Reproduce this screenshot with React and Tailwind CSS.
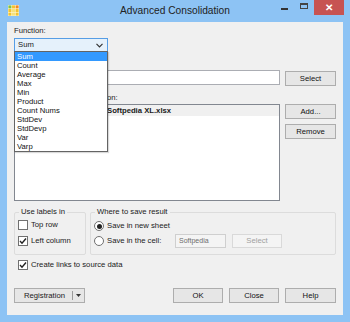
import React from 'react';

const font = { fontFamily: '"Liberation Sans", Arial, sans-serif' };

function Btn({ children, className = '', disabled }) {
  return (
    <div
      className={`flex items-center justify-center border ${disabled ? 'border-[#d9d9d9] bg-[#f4f4f4] text-[#a0a0a0]' : 'border-[#adadad] bg-[#e6e6e6] text-[#111]'} text-[7.7px] leading-none ${className}`}
    >
      {children}
    </div>
  );
}

function Check({ checked }) {
  return (
    <div className="w-[10px] h-[10px] border border-[#707070] bg-white flex items-center justify-center shrink-0">
      {checked && (
        <svg width="8" height="8" viewBox="0 0 8 8">
          <path d="M1 4 L3 6.2 L7 1.5" stroke="#222" strokeWidth="1.4" fill="none" />
        </svg>
      )}
    </div>
  );
}

function Radio({ checked }) {
  return (
    <div className="w-[10px] h-[10px] rounded-full border border-[#707070] bg-white flex items-center justify-center shrink-0">
      {checked && <div className="w-[5px] h-[5px] rounded-full bg-[#222]" />}
    </div>
  );
}

function AppIcon() {
  const colors = [
    ['#7cc24a', '#f2c230', '#f08a24'],
    ['#f2c230', '#f7e27a', '#f2c230'],
    ['#f2c230', '#f7e27a', '#f2c230'],
  ];
  return (
    <svg width="11" height="11" viewBox="0 0 11 11">
      <rect x="0" y="0" width="11" height="11" fill="#fff7d6" />
      {colors.map((row, r) =>
        row.map((c, i) => <rect key={`${r}-${i}`} x={i * 3.6 + 0.4} y={r * 3.6 + 0.4} width="3" height="3" fill={c} />)
      )}
    </svg>
  );
}

const items = ['Sum', 'Count', 'Average', 'Max', 'Min', 'Product', 'Count Nums', 'StdDev', 'StdDevp', 'Var', 'Varp'];

export default function App() {
  return (
    <div className="w-[350px] h-[322px] bg-[#8dc3f4] flex flex-col overflow-hidden text-[#1a1a1a]" style={font}>
      {/* title bar */}
      <div className="h-[22px] flex items-start relative shrink-0">
        <div className="pl-[8px] pt-[5px]">
          <AppIcon />
        </div>
        <div className="absolute left-0 right-0 top-[4px] text-center text-[10.2px] leading-[14px] text-[#222]">
          Advanced Consolidation
        </div>
        <div className="ml-auto flex items-start mr-[6px]">
          <div className="w-[20px] h-[15px] flex items-center justify-center">
            <div className="w-[7px] h-[2px] bg-[#333] mt-[3px]" />
          </div>
          <div className="w-[20px] h-[15px] flex items-center justify-center">
            <div className="w-[8px] h-[6px] border border-[#444] border-t-2 mb-[3px]" />
          </div>
          <div className="w-[30px] h-[15px] bg-[#c75352] flex items-center justify-center text-white text-[10px] leading-none font-bold">
            ✕
          </div>
        </div>
      </div>

      {/* client */}
      <div className="mx-[7px] mb-[7px] flex-1 bg-[#f0f0f0] relative px-[7px] flex flex-col text-[7.7px]">
        <div className="mt-[4px] h-[10px] leading-[10px]">Function:</div>
        <div className="mt-[2px] w-[94px] h-[14px] border border-[#569de5] bg-[#e5f1fb] flex items-center px-[3px]">
          <span>Sum</span>
          <svg className="ml-auto mr-[1px]" width="7" height="5" viewBox="0 0 7 5">
            <path d="M0.5 0.8 L3.5 3.8 L6.5 0.8" stroke="#333" strokeWidth="1.2" fill="none" />
          </svg>
        </div>
        <div className="mt-[8px] h-[10px]" />
        <div className="flex">
          <div className="w-[266px] h-[15px] border border-[#abadb3] bg-white" />
          <Btn className="ml-[5px] mt-[1px] w-[51px] h-[15px]">Select</Btn>
        </div>
        <div className="mt-[7px] h-[10px] leading-[10px] pl-[93px]">on:</div>
        <div className="flex mt-[1px]">
          <div className="w-[266px] h-[97px] border border-[#828790] bg-white">
            <div className="h-[11px] bg-[#f0f0f0] leading-[11px] font-bold pl-[92px] whitespace-nowrap">
              Softpedia XL.xlsx
            </div>
          </div>
          <div className="ml-[5px] flex flex-col gap-[5px]">
            <Btn className="w-[51px] h-[15px]">Add...</Btn>
            <Btn className="w-[51px] h-[15px]">Remove</Btn>
          </div>
        </div>

        <div className="flex mt-[6px] gap-[4px]">
          <fieldset className="w-[72px] h-[48px] border border-[#dcdcdc] rounded-[2px] px-[3px]">
            <legend className="leading-[10px] px-[2px] ml-[1px]">Use labels in</legend>
            <div className="flex items-center gap-[3px] mt-[3px] leading-[10px]">
              <Check />
              <span>Top row</span>
            </div>
            <div className="flex items-center gap-[3px] mt-[6px] leading-[10px]">
              <Check checked />
              <span>Left column</span>
            </div>
          </fieldset>
          <fieldset className="flex-1 h-[48px] border border-[#dcdcdc] rounded-[2px] px-[3px]">
            <legend className="leading-[10px] px-[2px] ml-[1px]">Where to save result</legend>
            <div className="flex items-center gap-[3px] mt-[4px] leading-[10px]">
              <Radio checked />
              <span>Save in new sheet</span>
            </div>
            <div className="flex items-center mt-[3px] leading-[10px]">
              <Radio />
              <span className="ml-[3px] w-[68px]">Save in the cell:</span>
              <div className="w-[51px] h-[14px] border border-[#cfcfcf] bg-[#f4f4f4] text-[7px] leading-[12px] pl-[3px] text-[#6d6d6d]">
                Softpedia
              </div>
              <Btn disabled className="ml-[6px] w-[50px] h-[14px]">Select</Btn>
            </div>
          </fieldset>
        </div>

        <div className="flex items-center gap-[3px] mt-[5px] ml-[4px] leading-[10px]">
          <Check checked />
          <span>Create links to source data</span>
        </div>

        <div className="flex mt-[18px]">
          <div className="w-[71px] h-[15px] border border-[#adadad] bg-[#e6e6e6] flex items-center leading-none">
            <span className="flex-1 text-center pl-[2px]">Registration</span>
            <div className="w-px h-[9px] bg-[#9a9a9a]" />
            <svg className="mx-[3px]" width="5" height="3" viewBox="0 0 5 3">
              <path d="M0 0 L5 0 L2.5 3 Z" fill="#333" />
            </svg>
          </div>
          <div className="ml-auto flex gap-[6px]">
            <Btn className="w-[50px] h-[15px]">OK</Btn>
            <Btn className="w-[50px] h-[15px]">Close</Btn>
            <Btn className="w-[51px] h-[15px]">Help</Btn>
          </div>
        </div>

        {/* dropdown list overlay */}
        <div className="absolute left-[7px] top-[29px] w-[94px] border border-[#646464] bg-white z-10 shadow-[1px_1px_1px_rgba(0,0,0,0.15)]">
          {items.map((it, i) => (
            <div
              key={it}
              className={`h-[9px] leading-[9px] pl-[2px] ${i === 0 ? 'bg-[#3399ff] text-white' : 'text-[#111]'}`}
            >
              {it}
            </div>
          ))}
        </div>
      </div>
    </div>
  );
}
